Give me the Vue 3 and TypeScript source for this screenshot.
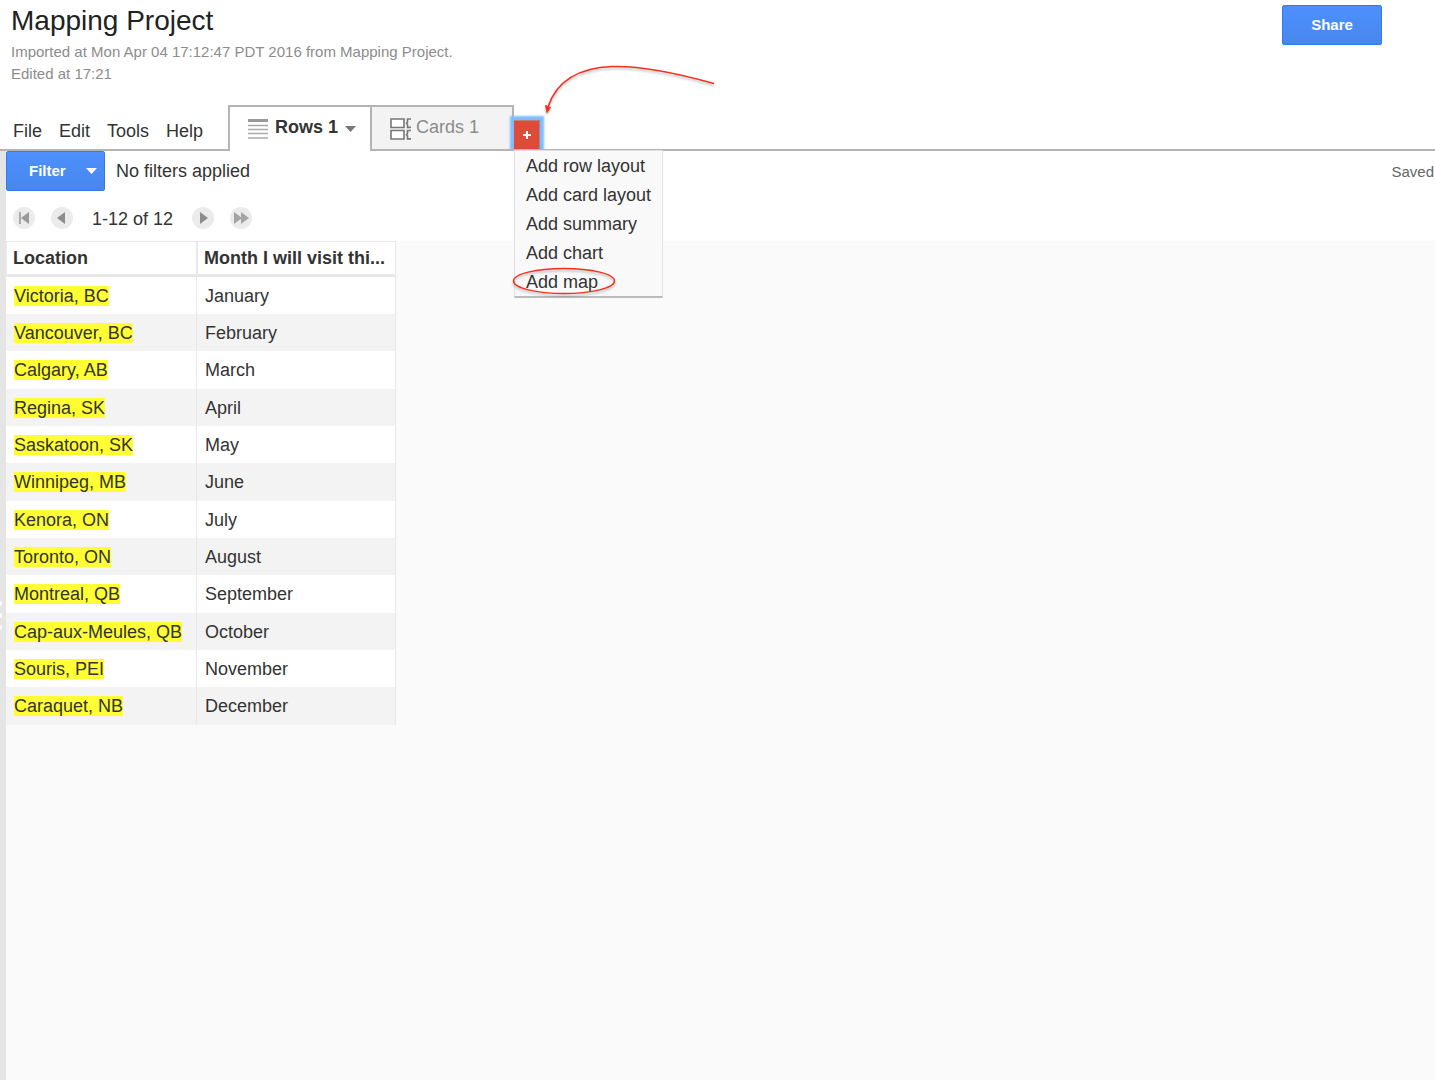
<script setup lang="ts">
interface Row {
  location: string
  month: string
}

const menus: string[] = ['File', 'Edit', 'Tools', 'Help']

const addOptions: string[] = [
  'Add row layout',
  'Add card layout',
  'Add summary',
  'Add chart',
  'Add map',
]

const rows: Row[] = [
  { location: 'Victoria, BC', month: 'January' },
  { location: 'Vancouver, BC', month: 'February' },
  { location: 'Calgary, AB', month: 'March' },
  { location: 'Regina, SK', month: 'April' },
  { location: 'Saskatoon, SK', month: 'May' },
  { location: 'Winnipeg, MB', month: 'June' },
  { location: 'Kenora, ON', month: 'July' },
  { location: 'Toronto, ON', month: 'August' },
  { location: 'Montreal, QB', month: 'September' },
  { location: 'Cap-aux-Meules, QB', month: 'October' },
  { location: 'Souris, PEI', month: 'November' },
  { location: 'Caraquet, NB', month: 'December' },
]
</script>

<template>
  <div class="page">
    <header class="header">
      <div>
        <h1 class="title">Mapping Project</h1>
        <p class="meta">Imported at Mon Apr 04 17:12:47 PDT 2016 from Mapping Project.</p>
        <p class="meta">Edited at 17:21</p>
      </div>
      <button type="button" class="blue share">Share</button>
    </header>

    <nav class="bar">
      <div class="menus">
        <button v-for="m in menus" :key="m" type="button" class="menu">{{ m }}</button>
      </div>
      <button type="button" class="tab active">
        <svg width="20" height="20" viewBox="0 0 20 20" aria-hidden="true">
          <path d="M0 1.5h20" stroke="#999" stroke-width="3" />
          <path d="M0 6.5h20M0 10.5h20M0 14.5h20M0 19h20" stroke="#aaa" stroke-width="1.6" />
        </svg>
        <span>Rows 1</span>
        <svg width="11" height="6" viewBox="0 0 11 6" aria-hidden="true">
          <path d="M0 0h11L5.500 6z" fill="#777" />
        </svg>
      </button>
      <button type="button" class="tab">
        <svg width="22" height="22" viewBox="0 0 22 22" fill="none" stroke="#777" stroke-width="1.6" aria-hidden="true">
          <path d="M1 1h13v8.500H1zM1 12.500h13V21H1z" fill="#fff" />
          <path d="M21 1H17.500v3l-1 1.200 1 1.200v3H21M21 12.500H17.500v3l-1 1.200 1 1.200v3H21" />
        </svg>
        <span>Cards 1</span>
      </button>
      <div class="adder">
        <button type="button" class="plus" aria-label="Add a view">
          <svg width="8" height="8" viewBox="0 0 8 8" aria-hidden="true">
            <path d="M4 0v8M0 4h8" stroke="#fff" stroke-width="2" />
          </svg>
        </button>
        <ul class="dropdown">
          <li v-for="o in addOptions" :key="o">
            <button type="button" class="option">{{ o }}</button>
            <svg v-if="o === 'Add map'" class="ring" width="106" height="32" viewBox="0 0 106 32" aria-hidden="true">
              <ellipse cx="53" cy="15" rx="50.500" ry="12.500" fill="none" stroke="#f5301c" stroke-width="1.400" />
            </svg>
          </li>
        </ul>
        <svg class="arrow" width="180" height="56" viewBox="0 0 180 56" aria-hidden="true">
          <path d="M174 23.500C104 4 27 -10 8 47" fill="none" stroke="#f5301c" stroke-width="1.500" />
          <path d="M5.500 45.500L10.500 47.500L7 52.500z" fill="#f5301c" stroke="#f5301c" />
        </svg>
      </div>
    </nav>

    <div class="body">
      <aside class="handle">
        <i></i><i></i><i></i>
      </aside>
      <main class="content">
        <div class="controls">
          <div class="toolbar">
            <button type="button" class="blue filter">
              <span>Filter</span>
              <svg width="11" height="6" viewBox="0 0 11 6" aria-hidden="true">
                <path d="M0 0h11L5.500 6z" fill="#fff" />
              </svg>
            </button>
            <span>No filters applied</span>
            <span class="saved">Saved</span>
          </div>
          <div class="pager">
            <button type="button" class="round" aria-label="First page">
              <svg width="22" height="22" viewBox="0 0 22 22"><path d="M7 5v12" stroke="#aaa" stroke-width="2" /><path d="M16 5v12L8 11z" fill="#999" /></svg>
            </button>
            <button type="button" class="round" aria-label="Previous page">
              <svg width="22" height="22" viewBox="0 0 22 22"><path d="M14 5v12L6 11z" fill="#8c8c8c" /></svg>
            </button>
            <span class="range">1-12 of 12</span>
            <button type="button" class="round" aria-label="Next page">
              <svg width="22" height="22" viewBox="0 0 22 22"><path d="M8 5v12L16 11z" fill="#8c8c8c" /></svg>
            </button>
            <button type="button" class="round" aria-label="Last page">
              <svg width="22" height="22" viewBox="0 0 22 22"><path d="M4 5v12L12 11zM11 5v12L19 11z" fill="#a4a4a4" /></svg>
            </button>
          </div>
        </div>
        <table class="grid">
          <thead>
            <tr>
              <th scope="col" class="place">Location</th>
              <th scope="col">Month I will visit thi...</th>
            </tr>
          </thead>
          <tbody>
            <tr v-for="r in rows" :key="r.location">
              <td><mark>{{ r.location }}</mark></td>
              <td>{{ r.month }}</td>
            </tr>
          </tbody>
        </table>
      </main>
    </div>
  </div>
</template>

<style>
body {
  margin: 0;
  background: #fff;
}
</style>

<style scoped>
.page {
  display: flex;
  flex-direction: column;
  min-height: 100vh;
  color: #333;
  font-family: "Liberation Sans", Arial, sans-serif;
  font-size: 18px;
  line-height: 22px;
}

button {
  margin: 0;
  padding: 0;
  border: 0;
  background: none;
  color: inherit;
  font: inherit;
  white-space: nowrap;
  cursor: pointer;
}

svg {
  display: block;
  flex: none;
}

.header {
  display: flex;
  align-items: flex-start;
  justify-content: space-between;
  box-sizing: border-box;
  min-height: 105px;
  padding: 5px 53px 0 11px;
}

.title {
  margin: 0 0 4px;
  color: #222;
  font-size: 28px;
  font-weight: 400;
  line-height: 32px;
}

.meta {
  margin: 0;
  color: #8c8c8c;
  font-size: 15px;
}

.blue {
  box-sizing: border-box;
  height: 40px;
  border: 1px solid #2f7bf0;
  border-radius: 2px;
  background: linear-gradient(#4d90fe, #4787ed);
  color: #fff;
  font-size: 15px;
  font-weight: 700;
}

.share {
  width: 100px;
}

.bar {
  display: flex;
  height: 44px;
  border-bottom: 2px solid #b4b4b4;
}

.menus {
  display: flex;
  align-items: center;
  gap: 17px;
  box-sizing: border-box;
  width: 228px;
  padding: 8px 0 0 13px;
}

.tab {
  display: flex;
  align-items: center;
  gap: 4px;
  box-sizing: border-box;
  width: 142px;
  height: 46px;
  padding: 0 16px 0 18px;
  border: solid #b4b4b4;
  border-width: 2px 2px 2px 0;
  background: #f3f3f3;
  color: #8c8c8c;
}

.tab svg {
  margin-top: 2px;
}

.tab span {
  margin-top: -2px;
}

.tab.active {
  gap: 7px;
  width: 144px;
  padding: 0 16px 2px 18px;
  border-width: 2px 2px 0;
  background: #fff;
  color: #333;
  font-weight: 700;
}

.adder {
  position: relative;
  display: flex;
  align-items: flex-end;
}

.plus {
  display: flex;
  align-items: center;
  justify-content: center;
  box-sizing: border-box;
  width: 26px;
  height: 29px;
  border: solid #b5827c;
  border-width: 1px 1px 0 0;
  background: #dd4b39;
  box-shadow: 0 0 2px 4px #7dbcff;
  clip-path: inset(-7px -7px 0 -7px);
}

.dropdown {
  position: absolute;
  z-index: 1;
  top: 45px;
  left: 0;
  box-sizing: border-box;
  width: 149px;
  margin: 0;
  padding: 0;
  border: 1px solid #e0e0e0;
  border-bottom: 2px solid #bbb;
  background: #f9f9f9;
  list-style: none;
}

.dropdown li {
  position: relative;
}

.option {
  display: block;
  width: 100%;
  height: 29px;
  padding-left: 11px;
  text-align: left;
}

.ring {
  position: absolute;
  top: -1px;
  left: -4px;
  filter: drop-shadow(0 2px 1px #0004);
  pointer-events: none;
}

.arrow {
  position: absolute;
  bottom: 33px;
  left: 26px;
  filter: drop-shadow(0 2px 1px #0004);
  pointer-events: none;
}

.body {
  display: flex;
  flex: 1;
}

.handle {
  display: flex;
  flex-direction: column;
  align-items: flex-start;
  justify-content: center;
  gap: 7px;
  width: 6px;
  background: #e5e5e5;
}

.handle i {
  width: 2px;
  height: 5px;
  border-radius: 0 3px 3px 0;
  background: #fff;
}

.content {
  flex: 1;
  background: #fafafa;
}

.controls {
  height: 90px;
  background: #fff;
}

.toolbar {
  display: flex;
  align-items: center;
  gap: 11px;
}

.filter {
  display: flex;
  align-items: center;
  justify-content: space-between;
  width: 99px;
  padding: 0 7px 0 22px;
}

.saved {
  margin-left: auto;
  padding: 2px 1px 0 0;
  color: #666;
  font-size: 15px;
}

.pager {
  display: flex;
  align-items: center;
  gap: 16px;
  padding: 15px 0 0 7px;
}

.round {
  width: 22px;
  height: 22px;
  border-radius: 50%;
  background: #ebebeb;
}

.range {
  padding: 2px 3px 0;
}

.grid {
  border-collapse: separate;
  border-spacing: 0;
  table-layout: fixed;
  width: 390px;
}

.grid th,
.grid td {
  box-sizing: border-box;
  padding: 0 0 0 8px;
  border-right: 1px solid #e8e8e8;
  text-align: left;
  white-space: nowrap;
}

.grid th {
  height: 36px;
  padding-left: 6px;
  border: solid #e8e8e8;
  border-width: 1px 1px 3px;
  background: #fff;
}

.grid .place {
  width: 191px;
}

.grid td {
  height: 37px;
  background: #fff;
}

.grid tr:nth-child(3n) td {
  height: 38px;
}

.grid tr:nth-child(even) td {
  background: #f3f3f3;
}

mark {
  background: #ff3;
  color: inherit;
}
</style>
